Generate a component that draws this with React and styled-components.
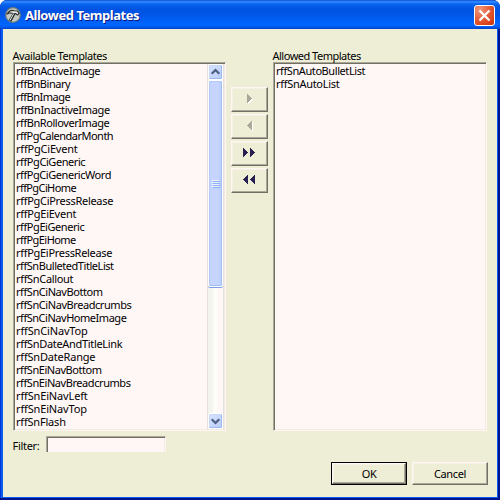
import React from "react";
import styled, { createGlobalStyle } from "styled-components";

const GlobalStyle = createGlobalStyle`
  body { margin: 0; background: #fff; }
  * { box-sizing: border-box; }
`;

const Dialog = styled.div`
  width: 500px;
  height: 500px;
  overflow: hidden;
  display: flex;
  flex-direction: column;
  border-radius: 7px 7px 0 0;
  background: #00138c;
  font: 11px/13px "Noto Sans", sans-serif;
  color: #000;
`;

const TitleBar = styled.header`
  height: 29px;
  flex: none;
  display: flex;
  align-items: center;
  padding: 2px 5px 0 5px;
  background: linear-gradient(
    #0a50d8 0, #3a92ff 2px, #1470fa 3px, #0560ea 5px, #0054e3 9px,
    #0055e5 14px, #005ff6 20px, #0066ff 25px, #005bf0 27px, #003fc4 29px
  );
`;

const Title = styled.h1`
  flex: 1;
  margin: 0 0 1px 4px;
  font: bold 13px/18px "Noto Sans", sans-serif;
  letter-spacing: ${(p) => p.$tracking}px;
  color: #fff;
  text-shadow: 1px 1px 0 #0a1883;
`;

const CloseButton = styled.button`
  width: 21px;
  height: 21px;
  padding: 0;
  border: 1px solid #fff;
  border-radius: 3px;
  background: radial-gradient(circle at 25% 20%, #f0987c 0, #e4603c 45%, #d8441c 75%, #b83410 100%);
  svg { display: block; }
`;

const Client = styled.main`
  flex: 1;
  margin: 0 2px 2px 1px;
  border: solid #0a5cf0;
  border-width: 0 1px 1px 2px;
  box-shadow: -1px 0 0 #0038d4;
  background: #eeeed6;
  padding: 21px 9px 0 10px;
`;

const Columns = styled.div`
  display: flex;
  align-items: flex-start;
`;

const Column = styled.section`
  width: ${(p) => p.$width}px;
`;

const Caption = styled.div`
  height: 12px;
  line-height: 11px;
  margin-left: -0.5px;
  white-space: nowrap;
  letter-spacing: ${(p) => p.$tracking || 0}px;
`;

const sunken = `
  border: 1px solid;
  border-color: #aca899 #fff6f4 #fff6f4 #aca899;
  box-shadow: inset 1px 1px 0 #716f64, inset -1px -1px 0 #f1ebe4;
  background: #fff6f6;
`;

const ListBox = styled.div`
  ${sunken}
  height: 369px;
  padding: 1px;
  display: flex;
`;

const Options = styled.ul`
  flex: 1;
  margin: 0;
  padding: 0 0 0 1px;
  list-style: none;
  overflow: hidden;
`;

const Option = styled.li`
  height: 13px;
  line-height: 13px;
  white-space: nowrap;
  letter-spacing: ${(p) => p.$tracking || 0}px;
`;

const ScrollBar = styled.div`
  width: 17px;
  display: flex;
  flex-direction: column;
  border: solid #e4e0e0;
  border-width: 0 1px;
  background: linear-gradient(90deg, #f4f4ee 0, #f6f6f0 5px, #fffefa 6px, #fffdf8 9px, #fff6f6 10px);
`;

const ScrollArrow = styled.div`
  height: 16px;
  border: 1px solid #fff;
  border-radius: 2px;
  box-shadow: inset -1px -1px 0 #9cb8f0, inset 1px 1px 0 #c8d8fc;
  background: linear-gradient(135deg, #d8e4ff, #b8ccf8);
  svg { display: block; }
`;

const Thumb = styled.div`
  height: 207px;
  display: flex;
  align-items: center;
  justify-content: center;
  border: 1px solid #fff;
  border-radius: 2px;
  box-shadow: inset -1px -1px 0 #a4bff4, inset 1px 1px 0 #b4c9f8, 0 1px 0 #7ea0e4;
  background: linear-gradient(90deg, #c6d5ff 0, #c6d5ff 9px, #b9cefb 12px);
`;

const Track = styled.div`
  flex: 1;
`;

const Transfer = styled.div`
  width: 37px;
  margin: 37px 5px 0 5px;
  display: flex;
  flex-direction: column;
  gap: 2px;
`;

const PushButton = styled.button`
  width: ${(p) => p.$width}px;
  height: ${(p) => p.$height}px;
  padding: 0 0 1px;
  display: flex;
  align-items: center;
  justify-content: center;
  font: inherit;
  letter-spacing: -0.35px;
  color: #000;
  background: #eeeed6;
  border: 1px solid;
  border-color: #fff6f4 #716f64 #716f64 #fff6f4;
  box-shadow: inset -1px -1px 0 #aca899, inset 1px 1px 0 #f5f1e5;
`;

const DefaultFrame = styled.div`
  border: 1px solid #000;
`;

const FilterRow = styled.label`
  display: flex;
  margin-top: 5px;
`;

const FilterText = styled.span`
  width: 33px;
  padding-top: 3px;
  line-height: 13px;
  letter-spacing: -0.3px;
  text-indent: -0.5px;
`;

const FilterInput = styled.input`
  ${sunken}
  width: 120px;
  height: 16px;
  border-bottom: 0;
  box-shadow: inset 1px 1px 0 #716f64, inset -1px 0 0 #f1ebe4;
  outline: 0;
  padding: 0 3px;
  font: inherit;
`;

const Actions = styled.footer`
  display: flex;
  justify-content: flex-end;
  gap: 5px;
  margin-top: 10px;
`;

const AVAILABLE = [
  ["rffBnActiveImage", -0.37], ["rffBnBinary", -0.45], ["rffBnImage", -0.5],
  ["rffBnInactiveImage", -0.33], ["rffBnRolloverImage", -0.44],
  ["rffPgCalendarMonth", -0.5], ["rffPgCiEvent", -0.2], ["rffPgCiGeneric", -0.43],
  ["rffPgCiGenericWord", -0.44], ["rffPgCiHome", -0.6], ["rffPgCiPressRelease", -0.3],
  ["rffPgEiEvent", -0.25], ["rffPgEiGeneric", -0.43], ["rffPgEiHome", -0.55],
  ["rffPgEiPressRelease", -0.3], ["rffSnBulletedTitleList", -0.45],
  ["rffSnCallout", -0.33], ["rffSnCiNavBottom", -0.44],
  ["rffSnCiNavBreadcrumbs", -0.43], ["rffSnCiNavHomeImage", -0.47],
  ["rffSnCiNavTop", -0.15], ["rffSnDateAndTitleLink", -0.33],
  ["rffSnDateRange", -0.2], ["rffSnEiNavBottom", -0.44],
  ["rffSnEiNavBreadcrumbs", -0.43], ["rffSnEiNavLeft", -0.15],
  ["rffSnEiNavTop", -0.15], ["rffSnFlash", -0.2],
];
const ALLOWED = [["rffSnAutoBulletList", -0.42], ["rffSnAutoList", -0.3]];

function HammerIcon() {
  return (
    <svg width="16" height="17" viewBox="0 0 16 17">
      <circle cx="8" cy="8" r="7.3" fill="#c3c8c0" stroke="#6f7a78" strokeWidth="1.2" />
      <path d="M5 14 L9.2 6.6" stroke="#272c2e" strokeWidth="2.8" />
      <path d="M2.4 6.8 C4 4 6.6 2.9 9 3.7 L12.4 4 L14 6.2 L12.6 8 L10.6 6.6 L7.6 6.2 C5.6 5.6 4 6 2.4 6.8Z" fill="#e9ece7" stroke="#272c2e" strokeWidth="1.1" />
      <path d="M5 13.4 L8.8 6.4" stroke="#e4e8e2" strokeWidth="1" />
    </svg>
  );
}

function CloseIcon() {
  return (
    <svg width="19" height="19" viewBox="0 0 19 19">
      <path d="M4.5 4.5 L14.5 14.5 M14.5 4.5 L4.5 14.5" stroke="#fff" strokeWidth="2.3" />
    </svg>
  );
}

function Chevron({ down }) {
  return (
    <svg width="13" height="14" viewBox="0 0 13 14">
      <path d={down ? "M2.7 5.3 L6.5 9 L10.3 5.3" : "M2.7 8.7 L6.5 5 L10.3 8.7"} fill="none" stroke="#4d6185" strokeWidth="2.3" />
    </svg>
  );
}

function Grip() {
  return (
    <svg width="8" height="8" viewBox="0 0 8 8" shapeRendering="crispEdges">
      <path d="M0 .5h7M0 2.5h7M0 4.5h7M0 6.5h7" stroke="#eef4fe" />
      <path d="M1 1.5h7M1 3.5h7M1 5.5h7M1 7.5h7" stroke="#8cb0f8" />
    </svg>
  );
}

function Arrows({ left, double, disabled }) {
  const one = left
    ? "M5 0 V9 H4 V8 H3 V7 H2 V6 H1 V5 H0 V4 H1 V3 H2 V2 H3 V1 H4 V0Z"
    : "M0 0 H1 V1 H2 V2 H3 V3 H4 V4 H5 V5 H4 V6 H3 V7 H2 V8 H1 V9 H0Z";
  return (
    <svg width="13" height="10" viewBox="0 0 13 10" shapeRendering="crispEdges">
      {disabled && <path d={one} transform="translate(5 1)" fill="#fff" />}
      <path d={one} transform={`translate(${double ? 0 : 4} 0)`} fill={disabled ? "#aca899" : "#282050"} />
      {double && <path d={one} transform="translate(7 0)" fill="#282050" />}
    </svg>
  );
}

function OptionList({ items }) {
  return (
    <Options>
      {items.map(([name, tracking]) => (
        <Option key={name} $tracking={tracking}>{name}</Option>
      ))}
    </Options>
  );
}

export default function App() {
  return (
    <>
      <GlobalStyle />
      <Dialog>
        <TitleBar>
          <HammerIcon />
          <Title $tracking={-0.46}>Allowed Templates</Title>
          <CloseButton aria-label="Close"><CloseIcon /></CloseButton>
        </TitleBar>
        <Client>
          <Columns>
            <Column $width={213}>
              <Caption $tracking={-0.42}>Available Templates</Caption>
              <ListBox>
                <OptionList items={AVAILABLE} />
                <ScrollBar>
                  <ScrollArrow><Chevron /></ScrollArrow>
                  <Thumb><Grip /></Thumb>
                  <Track />
                  <ScrollArrow><Chevron down /></ScrollArrow>
                </ScrollBar>
              </ListBox>
            </Column>
            <Transfer>
              <PushButton $width={37} $height={25} aria-label="Add"><Arrows disabled /></PushButton>
              <PushButton $width={37} $height={25} aria-label="Remove"><Arrows left disabled /></PushButton>
              <PushButton $width={37} $height={25} aria-label="Add all"><Arrows double /></PushButton>
              <PushButton $width={37} $height={25} aria-label="Remove all"><Arrows left double /></PushButton>
            </Transfer>
            <Column $width={214}>
              <Caption $tracking={-0.5}>Allowed Templates</Caption>
              <ListBox>
                <OptionList items={ALLOWED} />
              </ListBox>
            </Column>
          </Columns>
          <FilterRow>
            <FilterText>Filter:</FilterText>
            <FilterInput />
          </FilterRow>
          <Actions>
            <DefaultFrame><PushButton $width={74} $height={21}>OK</PushButton></DefaultFrame>
            <PushButton $width={76} $height={23}>Cancel</PushButton>
          </Actions>
        </Client>
      </Dialog>
    </>
  );
}
